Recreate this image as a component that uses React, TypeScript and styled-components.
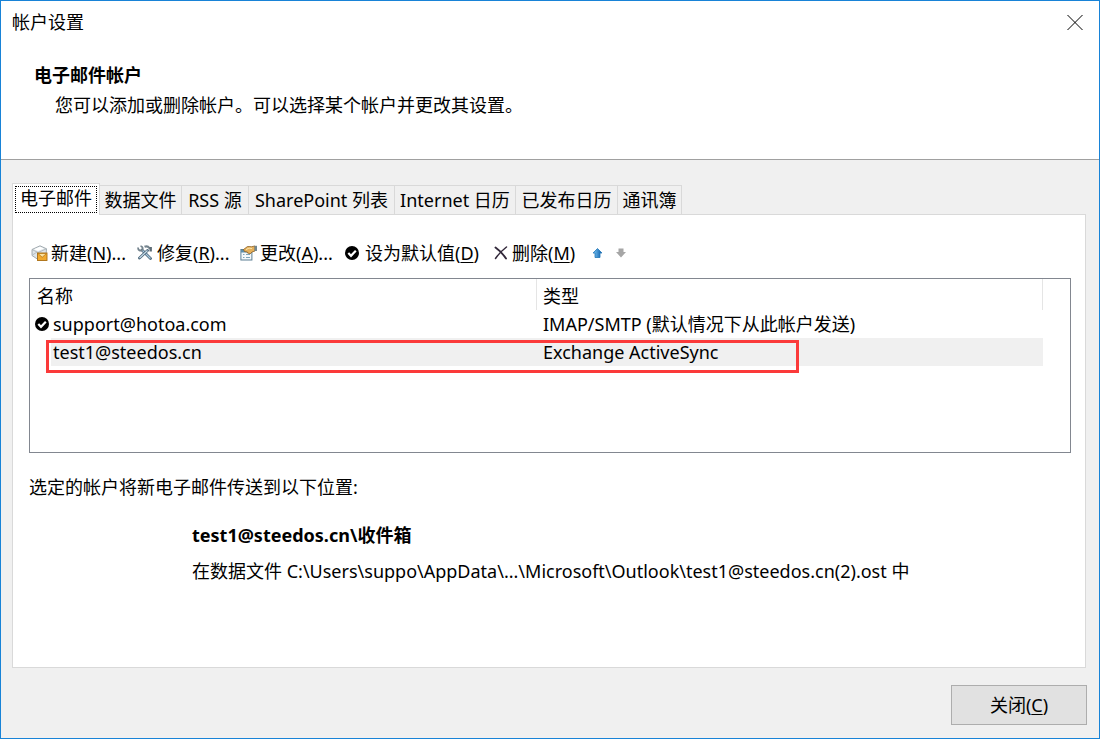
import React, { useState } from "react";
import styled, { createGlobalStyle, css } from "styled-components";

const GlobalStyle = createGlobalStyle`
  * { box-sizing: border-box; }
  body { margin: 0; }
  body, button, table {
    font-family: "Noto Sans", "Noto Sans CJK SC", sans-serif;
    font-size: 18px;
    line-height: 28px;
    color: #000;
  }
`;

const Dialog = styled.main`
  min-height: 100vh;
  display: flex;
  flex-direction: column;
  background: #f0f0f0;
  border: 1px solid #1883d7;
`;

const Header = styled.header`
  background: #fff;
  border-bottom: 1px solid #a0a0a0;
  padding: 7px 12px 40px 11px;
`;

const TitleBar = styled.div`
  display: flex;
  justify-content: space-between;
  align-items: center;
`;

const Title = styled.h1`
  margin: 0;
  font-size: 18px;
  font-weight: 400;
`;

const CloseIconButton = styled.button`
  display: flex;
  padding: 4px;
  border: 0;
  background: none;
`;

const Heading = styled.h2`
  margin: 25px 0 0 22px;
  font-size: 18px;
  font-weight: 700;
`;

const Description = styled.p`
  margin: 2px 0 0 43px;
`;

const Body = styled.div`
  flex: 1;
  display: flex;
  flex-direction: column;
  padding: 23px 13px 13px 11px;
`;

const TabList = styled.div`
  display: flex;
  align-items: flex-end;
`;

const Tab = styled.button<{ $width: number; $active: boolean }>`
  width: ${(p) => p.$width}px;
  height: 29px;
  padding: 0;
  border: 1px solid #d9d9d9;
  border-width: 1px 1px 0 0;
  background: #f0f0f0;
  white-space: nowrap;
  ${(p) =>
    p.$active &&
    css`
      height: 32px;
      margin-bottom: -1px;
      padding: 2px;
      border-left-width: 1px;
      background: #fff;
      z-index: 1;
    `}
`;

const FocusFrame = styled.span<{ $active: boolean }>`
  display: block;
  ${(p) =>
    p.$active &&
    css`
      height: 27px;
      line-height: 22px;
      border: 1px dotted #000;
    `}
`;

const Panel = styled.section`
  flex: 1;
  background: #fff;
  border: 1px solid #d9d9d9;
  padding: 24px 14px 16px 16px;
`;

const Toolbar = styled.div`
  display: flex;
  align-items: center;
  padding-left: 2px;
  margin-bottom: 11px;
`;

const ToolButton = styled.button<{ $width?: number; $gap?: number }>`
  display: flex;
  align-items: center;
  gap: ${(p) => p.$gap ?? 4}px;
  width: ${(p) => (p.$width ? `${p.$width}px` : "auto")};
  padding: 0;
  border: 0;
  background: none;
  white-space: nowrap;
  svg { flex: none; }
`;

const ListBox = styled.div`
  position: relative;
  height: 175px;
  border: 1px solid #828790;
  padding-right: 27px;
`;

const AccountTable = styled.table`
  width: 100%;
  border-collapse: separate;
  border-spacing: 0;
  table-layout: fixed;
`;

const ColumnHead = styled.th<{ $width?: string }>`
  width: ${(p) => p.$width ?? "auto"};
  height: 31px;
  padding: 2px 6px 0;
  border-right: 1px solid #e5e5e5;
  font-weight: 400;
  text-align: left;
`;

const NameHead = styled(ColumnHead)`
  padding-left: 7px;
`;

const Cell = styled.td<{ $selected: boolean }>`
  height: 28px;
  padding: 0 6px;
  background: ${(p) => (p.$selected ? "#f0f0f0" : "#fff")};
`;

const NameCell = styled(Cell)`
  padding: 0;
  background: ${(p) =>
    p.$selected ? "linear-gradient(to right, #fff 21px, #f0f0f0 21px)" : "#fff"};
`;

const Name = styled.span`
  display: grid;
  grid-template-columns: 14px 1fr;
  align-items: center;
  gap: 4px;
  padding-left: 5px;
`;

const NameText = styled.span`
  grid-column: 2;
`;

const Highlight = styled.div`
  position: absolute;
  left: 16px;
  top: 61px;
  width: 753px;
  height: 33px;
  border: 3px solid #fb3a3a;
  pointer-events: none;
`;

const DeliveryNote = styled.p`
  margin: 20px 0 0;
`;

const Delivery = styled.div`
  margin: 20px 0 0 163px;
`;

const Folder = styled.p`
  margin: 0;
  font-weight: 700;
`;

const DataFile = styled.p`
  margin: 8px 0 0;
`;

const Footer = styled.footer`
  display: flex;
  justify-content: flex-end;
  margin: 17px -1px 0 0;
`;

const CloseButton = styled.button`
  width: 136px;
  height: 40px;
  padding: 0;
  border: 1px solid #adadad;
  background: #e1e1e1;
`;

const Key = styled.u`
  text-decoration-thickness: 1px;
  text-underline-offset: 2px;
`;

const CloseIcon = () => (
  <svg width="16" height="16" viewBox="0 0 16 16" stroke="#000">
    <path d="M.5 1l15 15M15.500 1l-15 15" />
  </svg>
);

const NewIcon = () => (
  <svg width="17" height="16" viewBox="0 0 17 16">
    <path d="M1 4.500L9 .8l6.500 3L15 11l-8 3.500-6-4z" fill="#dfe5e8" stroke="#8f999f" strokeWidth=".8" />
    <path d="M1 4.500l6 3 8.500-3.700M7 7.500v6.500M1.500 10L6 7" fill="none" stroke="#a8b0b5" strokeWidth=".8" />
    <path d="M3 4.200l6-2.400 4 1.700-6 2.600z" fill="#fff" />
    <rect x="6.500" y="8" width="9.500" height="7.500" fill="#f0a92e" stroke="#a96e12" strokeWidth=".9" />
    <path d="M7 8.500l4.200 3.800 4.300-3.800z" fill="#fbe2a0" stroke="#b87916" strokeWidth=".8" />
  </svg>
);

const RepairIcon = () => (
  <svg width="16" height="16" viewBox="0 0 16 16" fill="none">
    <path d="M5 5l8.500 8.500" stroke="#4a6478" strokeWidth="2.800" strokeLinecap="round" />
    <path d="M5 5l8.500 8.500" stroke="#a9cbe0" strokeWidth="1.200" />
    <path d="M10.500 5.500L2.500 13" stroke="#4a6478" strokeWidth="2.800" strokeLinecap="round" />
    <path d="M10.500 5.500L2.500 13" stroke="#c9dfeb" strokeWidth="1.200" />
    <path d="M1 2.500c0 3 2.500 3.800 4 2.500S5.500 1.500 3.500 1" stroke="#74838d" strokeWidth="1.800" />
    <path d="M7.500 1.800c2-.9 3.800-.3 4.800 1.200l1.200.6" stroke="#74838d" strokeWidth="2.200" />
    <path d="M13.700 2v4.500" stroke="#5d6c76" strokeWidth="2.400" />
  </svg>
);

const ChangeIcon = () => (
  <svg width="17" height="16" viewBox="0 0 17 16">
    <rect x=".9" y="4.500" width="11" height="10.500" fill="#f4f8fa" stroke="#5c7f93" />
    <path d="M1 5h11v2.500H1z" fill="#5d8eab" />
    <path d="M3 9.500h1.500M6 9.500h4M3 12.500h1.500M6 12.500h4" stroke="#7fa4b8" strokeWidth="1.200" />
    <path d="M3.500 4.500L7.500 1.500l4 .2L15 1v5l-3 1-2 2-1.200-.8L8 8.500 7.300 7 4.500 6.500z" fill="#e5b05a" stroke="#8b6024" strokeWidth=".8" />
    <path d="M6 4.600l3-1.500 3 .4" fill="none" stroke="#fbe5ae" />
    <path d="M14.500.8H17V6h-2.500z" fill="#72868f" />
  </svg>
);

const DefaultIcon = () => (
  <svg width="14" height="14" viewBox="0 0 14 14">
    <circle cx="7" cy="7" r="7" fill="#000" />
    <path d="M3.300 7l2.700 2.800 4.800-5" fill="none" stroke="#fff" strokeWidth="2.200" />
  </svg>
);

const RemoveIcon = () => (
  <svg width="14" height="14" viewBox="0 0 14 14" fill="none" stroke="#32283a" strokeLinecap="round">
    <path d="M1.500 1.500C5 4 9 8 12 12.500" strokeWidth="1.900" />
    <path d="M12.500 1C8 4.500 4.500 8 1.500 12.500" strokeWidth="1.500" />
  </svg>
);

const UpIcon = () => (
  <svg width="11" height="10" viewBox="0 0 11 10">
    <defs>
      <linearGradient id="up" x1="0" x2="1">
        <stop offset="0" stopColor="#7cc8f6" />
        <stop offset="1" stopColor="#0a5ba8" />
      </linearGradient>
    </defs>
    <path d="M5.500.5L10 5H8v4.500H3V5H1z" fill="url(#up)" stroke="#2377b8" strokeWidth=".8" />
  </svg>
);

const DownIcon = () => (
  <svg width="10" height="10" viewBox="0 0 10 10">
    <path d="M2.500.5h5V4H10L5 9.500 0 4h2.500z" fill="#a6a6a6" />
  </svg>
);

const tabs = [
  { label: "电子邮件", width: 88 },
  { label: "数据文件", width: 82 },
  { label: "RSS 源", width: 67 },
  { label: "SharePoint 列表", width: 146 },
  { label: "Internet 日历", width: 121 },
  { label: "已发布日历", width: 102 },
  { label: "通讯簿", width: 64 },
];

const accounts = [
  { name: "support@hotoa.com", type: "IMAP/SMTP (默认情况下从此帐户发送)", isDefault: true },
  { name: "test1@steedos.cn", type: "Exchange ActiveSync", isDefault: false },
];

export default function App() {
  const [activeTab, setActiveTab] = useState(0);
  const [selected, setSelected] = useState(1);

  return (
    <>
      <GlobalStyle />
      <Dialog>
        <Header>
          <TitleBar>
            <Title>帐户设置</Title>
            <CloseIconButton type="button" aria-label="关闭">
              <CloseIcon />
            </CloseIconButton>
          </TitleBar>
          <Heading>电子邮件帐户</Heading>
          <Description>您可以添加或删除帐户。可以选择某个帐户并更改其设置。</Description>
        </Header>

        <Body>
          <TabList role="tablist">
            {tabs.map((tab, i) => (
              <Tab
                key={tab.label}
                type="button"
                role="tab"
                aria-selected={i === activeTab}
                $width={tab.width}
                $active={i === activeTab}
                onClick={() => setActiveTab(i)}
              >
                <FocusFrame $active={i === activeTab}>{tab.label}</FocusFrame>
              </Tab>
            ))}
          </TabList>

          <Panel>
            <Toolbar role="toolbar">
              <ToolButton type="button" $width={106} $gap={3}>
                <NewIcon />
                <span>新建(<Key>N</Key>)...</span>
              </ToolButton>
              <ToolButton type="button" $width={103}>
                <RepairIcon />
                <span>修复(<Key>R</Key>)...</span>
              </ToolButton>
              <ToolButton type="button" $width={105} $gap={3}>
                <ChangeIcon />
                <span>更改(<Key>A</Key>)...</span>
              </ToolButton>
              <ToolButton type="button" $width={149} $gap={6}>
                <DefaultIcon />
                <span>设为默认值(<Key>D</Key>)</span>
              </ToolButton>
              <ToolButton type="button" $width={98}>
                <RemoveIcon />
                <span>删除(<Key>M</Key>)</span>
              </ToolButton>
              <ToolButton type="button" $width={24} aria-label="上移">
                <UpIcon />
              </ToolButton>
              <ToolButton type="button" aria-label="下移">
                <DownIcon />
              </ToolButton>
            </Toolbar>

            <ListBox>
              <AccountTable>
                <thead>
                  <tr>
                    <NameHead scope="col" $width="507px">名称</NameHead>
                    <ColumnHead scope="col">类型</ColumnHead>
                  </tr>
                </thead>
                <tbody>
                  {accounts.map((account, i) => (
                    <tr key={account.name} onClick={() => setSelected(i)}>
                      <NameCell $selected={i === selected}>
                        <Name>
                          {account.isDefault && <DefaultIcon />}
                          <NameText>{account.name}</NameText>
                        </Name>
                      </NameCell>
                      <Cell $selected={i === selected}>{account.type}</Cell>
                    </tr>
                  ))}
                </tbody>
              </AccountTable>
              <Highlight />
            </ListBox>

            <DeliveryNote>选定的帐户将新电子邮件传送到以下位置:</DeliveryNote>
            <Delivery>
              <Folder>test1@steedos.cn\收件箱</Folder>
              <DataFile>
                在数据文件 C:\Users\suppo\AppData\...\Microsoft\Outlook\test1@steedos.cn(2).ost 中
              </DataFile>
            </Delivery>
          </Panel>

          <Footer>
            <CloseButton type="button">
              关闭(<Key>C</Key>)
            </CloseButton>
          </Footer>
        </Body>
      </Dialog>
    </>
  );
}
